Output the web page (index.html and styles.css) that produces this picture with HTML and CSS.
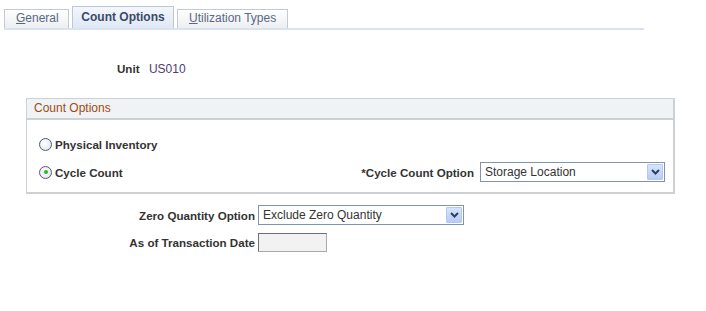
FILE: index.html
```html
<!DOCTYPE html>
<html>
<head>
<meta charset="utf-8">
<link rel="stylesheet" href="styles.css">
</head>
<body>
<div class="tabbar">
  <div class="tab"><u>G</u>eneral</div>
  <div class="tab active">Count Options</div>
  <div class="tab"><u>U</u>tilization Types</div>
</div>

<div class="unit-row">
  <span class="lbl">Unit</span>
  <span class="val">US010</span>
</div>

<div class="group">
  <div class="group-head">Count Options</div>
  <div class="group-body">
    <div class="radio-row">
      <span class="radio"></span>
      <span class="lbl">Physical Inventory</span>
    </div>
    <div class="radio-row second">
      <span class="radio checked"></span>
      <span class="lbl">Cycle Count</span>
      <div class="spacer"></div>
      <span class="lbl">*Cycle Count Option</span>
      <div class="select wide">
        <span>Storage Location</span>
        <span class="dd"><svg width="9" height="6" viewBox="0 0 9 6"><path d="M1 1 L4.5 4.5 L8 1" fill="none" stroke="#2e3f66" stroke-width="2"/></svg></span>
      </div>
    </div>
  </div>
</div>

<div class="form">
  <span class="lbl">Zero Quantity Option</span>
  <div class="select mid">
    <span>Exclude Zero Quantity</span>
    <span class="dd"><svg width="9" height="6" viewBox="0 0 9 6"><path d="M1 1 L4.5 4.5 L8 1" fill="none" stroke="#2e3f66" stroke-width="2"/></svg></span>
  </div>
  <span class="lbl">As of Transaction Date</span>
  <div class="date"></div>
</div>
</body>
</html>
```
FILE: styles.css
```css
body {
  margin: 0;
  font-family: "Liberation Sans", Arial, sans-serif;
  font-size: 12px;
  color: #333;
  background: #fff;
}
.tabbar {
  display: flex;
  align-items: flex-end;
  gap: 3px;
  margin-left: 4px;
  width: 640px;
  height: 22px;
  padding-top: 6px;
  border-bottom: 2px solid #d8e2f2;
}
.tab {
  box-sizing: border-box;
  height: 19px;
  padding: 0 11px;
  line-height: 17px;
  white-space: nowrap;
  color: #5a6884;
  border: 1px solid #c5cad2;
  border-bottom: none;
  background: linear-gradient(#ffffff, #eceef0);
}
.tab:first-child { width: 65px; }
.tab.active {
  height: 22px;
  line-height: 21px;
  font-weight: bold;
  color: #3b4a6b;
  border-color: #b9c8dc;
  background: linear-gradient(#f4f7fb, #dfe8f5);
  width: 102px;
  text-align: center;
  padding: 0;
}
.tab:last-child { width: 111px; }
.unit-row {
  margin-top: 31px;
  padding-left: 117px;
  height: 16px;
  line-height: 16px;
}
.lbl {
  font-weight: bold;
  font-size: 11.6px;
  color: #333;
  white-space: nowrap;
}
.unit-row .val {
  margin-left: 6px;
  color: #4f3c72;
}
.group {
  margin: 21px 0 0 26px;
  width: 649px;
  box-sizing: border-box;
  border: 2px solid #cdd1d6;
  border-width: 1px 2px 2px 1px;
  height: 96px;
}
.group-head {
  line-height: 19px;
  padding-left: 7px;
  background: #f0f3f5;
  border-bottom: 2px solid #cdd1d6;
  color: #a04a13;
  box-sizing: border-box;
  height: 21px;
}
.group-body {
  padding: 14px 8px 0 12px;
}
.radio-row {
  display: flex;
  align-items: center;
  height: 20px;
  gap: 3px;
}
.radio-row.second { margin-top: 8px; }
.radio {
  width: 11px;
  height: 11px;
  border-radius: 50%;
  border: 1px solid #4d5b73;
  background: radial-gradient(circle at 40% 40%, #fff, #dde1e6);
  position: relative;
  box-sizing: content-box;
}
.radio.checked::after {
  content: "";
  position: absolute;
  left: 3.5px;
  top: 3.5px;
  width: 4px;
  height: 4px;
  border-radius: 50%;
  background: #2fb32a;
}
.spacer { flex: 1; }
.select {
  box-sizing: border-box;
  height: 20px;
  border: 1px solid #7f95ad;
  display: flex;
  align-items: center;
  justify-content: space-between;
  padding-left: 4px;
  padding-right: 1px;
  color: #333;
  background: #fff;
}
.select.wide { width: 185px; margin-left: 3px; margin-top: -1px; }
.select.mid { width: 206px; }
.dd {
  width: 16px;
  height: 16px;
  border: 1px solid #b4c8f0;
  box-sizing: border-box;
  background: linear-gradient(#d8e4fb, #b7cbf5);
  display: flex;
  align-items: center;
  justify-content: center;
  border-radius: 1px;
}
.form {
  display: grid;
  grid-template-columns: 255px auto;
  column-gap: 3px;
  row-gap: 8px;
  align-items: center;
  margin-top: 11px;
}
.form .lbl { text-align: right; }
.date {
  width: 69px;
  height: 19px;
  box-sizing: border-box;
  border: 1px solid #a8a8a8;
  border-top-color: #6f6f6f;
  border-left-color: #6f6f6f;
  background: #f2f2f2;
}
```
